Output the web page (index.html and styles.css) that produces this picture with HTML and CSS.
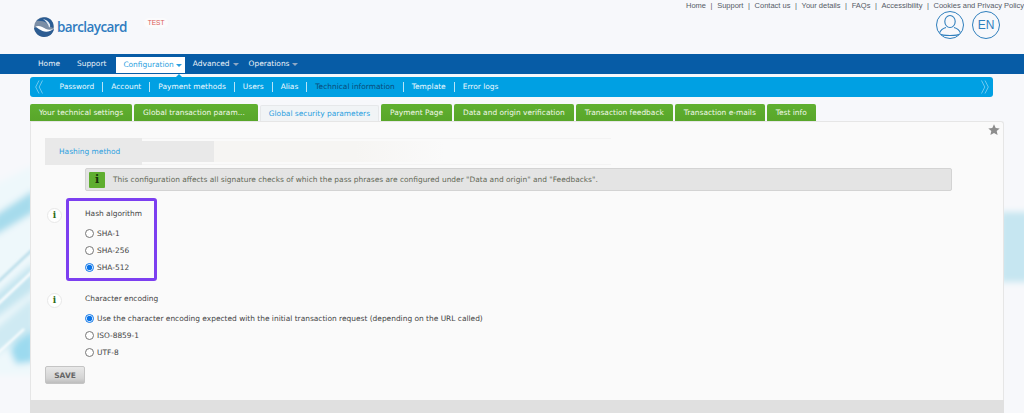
FILE: index.html
```html
<!DOCTYPE html>
<html lang="en">
<head>
<meta charset="utf-8">
<title>Global security parameters</title>
<link rel="stylesheet" href="styles.css">
</head>
<body>
<svg class="wash" viewBox="0 0 1024 413" width="1024" height="413" aria-hidden="true">
  <defs>
    <filter id="soft" x="-30%" y="-30%" width="160%" height="160%"><feGaussianBlur stdDeviation="3"/></filter>
    <filter id="softer" x="-30%" y="-30%" width="160%" height="160%"><feGaussianBlur stdDeviation="1.200"/></filter>
  </defs>
  <g filter="url(#soft)">
    <path d="M-6 185L34 165V375L-6 375z" fill="#eef8fb"/>
    <path d="M-6 216L34 190V212L-6 236z" fill="#a6dbec"/>
    <path d="M-6 296L34 262V290L-6 320z" fill="#c4e5f0"/>
    <path d="M10 350L34 318V362L16 364z" fill="#9cdaef"/>
    <path d="M-6 330L34 296V330L-6 356z" fill="#cfeaf3"/>
  </g>
  <g filter="url(#softer)">
    <path d="M-2 282L32 250" stroke="#bddfeb" stroke-width="3" fill="none"/>
    <path d="M-2 304L32 272" stroke="#fafdfe" stroke-width="3" fill="none"/>
    <path d="M-2 353L24 329" stroke="#ffffff" stroke-width="2" fill="none"/>
  </g>
  <path d="M1000 212H1030V282H1000z" fill="#c6e6f1" filter="url(#soft)"/>
</svg>

<header class="masthead">
  <div class="brand">
    <svg class="logo-mark" viewBox="0 0 20 20" width="20" height="20" aria-hidden="true">
      <circle cx="10" cy="10" r="10" fill="#7b8ea6"/>
      <path d="M2 4.500C5 .5 12-1 16 2c3 2.500 4 6 3 9-3-1-5-3-6.500-5-2-1.500-6-2.500-10.500-2z" fill="#2a5c94"/>
      <path d="M0 11c4-2 8 0 11 2 3 1.500 6 1 9-1-1 5-5 8-10 8-5 0-9-4-10-9z" fill="#2d5d92"/>
      <path d="M1.500 9.500C5 8 9 10 12 12c2.500 1 5 1 7.500-.5C16 15 12 15.500 8.500 14 6 13 3.500 11 1.500 9.500z" fill="#fff"/>
      <path d="M9 2c3 .5 6 2.500 7 5.500.3 1.500 0 2.500-.8 3C14.500 7.500 12 4 9 2z" fill="#e4ebf3"/>
    </svg>
    <span class="wordmark">barclaycard</span>
    <span class="env">TEST</span>
  </div>
  <div class="account">
    <nav class="toplinks">
      <a>Home</a><i>|</i><a>Support</a><i>|</i><a>Contact us</a><i>|</i><a>Your details</a><i>|</i><a>FAQs</a><i>|</i><a>Accessibility</a><i>|</i><a>Cookies and Privacy Policy</a>
    </nav>
    <div class="round-buttons">
      <span class="round">
        <svg viewBox="0 0 26 26" width="26" height="26" fill="none" stroke="#2f7fbd" stroke-width="1.100" aria-hidden="true">
          <ellipse cx="13" cy="9.500" rx="5.200" ry="6"/>
          <path d="M2.500 21c1-3 3-4.500 6.500-5.500M23.500 21c-1-3-3-4.500-6.500-5.500M3 22c2 2 18 2 20 0"/>
        </svg>
      </span>
      <span class="round lang">EN</span>
    </div>
  </div>
</header>

<nav class="mainnav">
  <a>Home</a>
  <a>Support</a>
  <a class="current">Configuration<b class="caret"></b></a>
  <a class="drop">Advanced<b class="caret dim"></b></a>
  <a class="drop">Operations<b class="caret dim"></b></a>
</nav>

<nav class="subnav">
  <svg class="chev" viewBox="0 0 8 14" width="8" height="14" fill="none" stroke="#6cc8ef" stroke-width="1" aria-hidden="true"><path d="M4 .5L.7 7 4 13.500M7.500 .5L4.200 7l3.300 6.500"/></svg>
  <div class="sublinks">
    <a>Password</a><a>Account</a><a>Payment methods</a><a>Users</a><a>Alias</a><a class="active">Technical information</a><a>Template</a><a>Error logs</a>
  </div>
  <svg class="chev" viewBox="0 0 8 14" width="8" height="14" fill="none" stroke="#6cc8ef" stroke-width="1" aria-hidden="true"><path d="M.5 .5L3.800 7 .5 13.500M4 .5L7.300 7 4 13.500"/></svg>
</nav>

<div class="tabs">
  <a class="tab">Your technical settings</a>
  <a class="tab truncated">Global transaction param...</a>
  <a class="tab selected">Global security parameters</a>
  <a class="tab">Payment Page</a>
  <a class="tab">Data and origin verification</a>
  <a class="tab">Transaction feedback</a>
  <a class="tab">Transaction e-mails</a>
  <a class="tab">Test info</a>
</div>

<main class="panel">
  <div class="star-row">
    <svg viewBox="0 0 12 12" width="12" height="12" aria-hidden="true"><path d="M6 .3l1.700 3.700 4 .4-3 2.700.9 4L6 9.100 2.400 11.100l.9-4-3-2.700 4-.4z" fill="#8d8d8d"/></svg>
  </div>
  <h2 class="section"><span class="section-label">Hashing method</span></h2>
  <div class="notice">
    <span class="notice-icon">i</span>
    <p>This configuration affects all signature checks of which the pass phrases are configured under "Data and origin" and "Feedbacks".</p>
  </div>
  <div class="field first">
    <span class="hint">i</span>
    <div class="group highlighted" role="radiogroup">
      <div class="group-title">Hash algorithm</div>
      <label><input type="radio" name="hash">SHA-1</label>
      <label><input type="radio" name="hash">SHA-256</label>
      <label><input type="radio" name="hash" checked>SHA-512</label>
    </div>
  </div>
  <div class="field second">
    <span class="hint">i</span>
    <div class="group" role="radiogroup">
      <div class="group-title">Character encoding</div>
      <label><input type="radio" name="enc" checked>Use the character encoding expected with the initial transaction request (depending on the URL called)</label>
      <label><input type="radio" name="enc">ISO-8859-1</label>
      <label><input type="radio" name="enc">UTF-8</label>
    </div>
  </div>
  <button class="save" type="button">SAVE</button>
</main>
<div class="panel-foot"></div>
</body>
</html>
```
FILE: styles.css
```css
* { box-sizing: border-box; }
html, body { height: 100%; }
body {
  margin: 0;
  overflow: hidden;
  font-family: "DejaVu Sans", Verdana, sans-serif;
  font-size: 7.45px;
  color: #444;
  background-color: #f7f8fb;
}
a { color: inherit; text-decoration: none; }
.wash { position: absolute; left: 0; top: 0; z-index: -1; }

.masthead {
  height: 54px;
  display: flex;
  justify-content: space-between;
}
.brand {
  display: flex;
  align-items: flex-start;
  padding: 17px 0 0 34px;
}
.logo-mark { flex: none; }
.wordmark {
  font-family: "Open Sans", sans-serif;
  font-size: 13.5px;
  font-weight: 600;
  line-height: 20px;
  letter-spacing: -0.6px;
  color: #2f7cc0;
  margin-left: 3px;
}
.env {
  font-family: "Liberation Sans", sans-serif;
  font-size: 6.5px;
  line-height: 10px;
  color: #dc5a55;
  background: #fbfbfc;
  border-radius: 5px;
  padding: 0 4px;
  margin: 1px 0 0 17px;
}
.account {
  width: 340px;
  display: flex;
  flex-direction: column;
  align-items: flex-end;
}
.toplinks {
  font-family: "Liberation Sans", sans-serif;
  font-size: 7.5px;
  line-height: 11px;
  color: #555a66;
  white-space: nowrap;
}
.toplinks i { font-style: normal; margin: 0 4.6px; }
.round-buttons {
  display: flex;
  gap: 8px;
  padding-right: 24px;
}
.round {
  width: 28px;
  height: 28px;
  border: 1px solid #2f7fbd;
  border-radius: 50%;
  display: flex;
  align-items: center;
  justify-content: center;
  overflow: hidden;
}
.lang {
  font-family: "Liberation Sans", sans-serif;
  font-size: 12px;
  color: #2f7fbd;
}

.mainnav {
  height: 20px;
  background: #075ca6;
  display: flex;
  align-items: flex-start;
  padding: 3px 0 0 30px;
  color: #eef3f8;
}
.mainnav a { line-height: 14px; padding: 0 8px; margin-right: 1px; white-space: nowrap; }
.mainnav a.current {
  position: relative;
  background: #fff;
  color: #2c9fe0;
  height: 16px;
  line-height: 15px;
  padding: 0 3px 0 7px;
  margin: 0 0 0 1px;
}
.mainnav a.drop { padding-right: 1px; }
.mainnav a.current::after {
  content: "";
  position: absolute;
  left: 60px;
  top: 17px;
  border: 3px solid transparent;
  border-bottom-color: #00a0e3;
  border-top: 0;
}
.caret {
  display: inline-block;
  width: 0;
  height: 0;
  border: 3px solid transparent;
  border-top-color: #2c9fe0;
  border-bottom: 0;
  margin-left: 2px;
}
.caret.dim { border-top-color: #8fa8c4; margin-left: 3px; }

.subnav {
  height: 20px;
  width: 963px;
  margin: 3px 0 0 30px;
  background: #00a0e3;
  border-radius: 3px;
  display: flex;
  align-items: center;
  padding: 0 4px 0 5px;
  color: #eefaff;
}
.chev { flex: none; }
.sublinks { flex: 1; display: flex; padding-left: 8.5px; white-space: nowrap; }
.sublinks a { padding: 0 8px; border-right: 1px solid #b7e4f7; line-height: 10px; }
.sublinks a:last-child { border-right: 0; }
.sublinks a.active { color: #0b4a78; }

.tabs {
  display: flex;
  gap: 2px;
  margin: 7px 0 0 30px;
  height: 17px;
}
.tab {
  height: 17px;
  padding: 0 9px;
  background: linear-gradient(#60b030, #58a62a);
  border-radius: 2px 2px 0 0;
  color: #f2f8ea;
  line-height: 17px;
  white-space: nowrap;
}
.tab.truncated { padding-right: 13px; }
.tab.selected {
  background: #f1f4f6;
  color: #2c9fe0;
  height: 16px;
  line-height: 15px;
  margin-top: 1px;
  padding: 0 8px;
  border: 1px solid #e6e8ea;
  border-bottom: 0;
}

.panel {
  width: 974px;
  height: 279px;
  margin-left: 30px;
  background: #fafafa;
  border: 1px solid #e6e6e6;
  border-bottom: 0;
  border-radius: 0 3px 0 0;
  padding: 0 14px;
}
.star-row {
  display: flex;
  justify-content: flex-end;
  height: 16px;
  padding-top: 2px;
  margin-right: -11px;
}
.section {
  height: 27px;
  margin: 0;
  font-size: inherit;
  font-weight: normal;
  color: #2c9fe0;
  line-height: 27px;
  padding-left: 14px;
  background:
    linear-gradient(90deg, #e9e9e9 0 97px, transparent 97px) 0 0 no-repeat,
    linear-gradient(90deg, #e9e9e9 0 169px, #f6f5f3 169px 310px, #fafafa 400px) 0 3px / 100% 21px no-repeat,
    linear-gradient(#f3f3f3, #f3f3f3) 0 0 / 60% 1px no-repeat,
    linear-gradient(#f3f3f3, #f3f3f3) 0 100% / 60% 1px no-repeat;
}
.notice {
  margin: 3px 0 0 40px;
  width: 867px;
  height: 23px;
  background: #e4e4e4;
  border: 1px solid #d3d3d3;
  border-radius: 2px;
  display: flex;
  align-items: center;
  padding-left: 3px;
  color: #636857;
}
.notice p { margin: 0 0 0 8px; }
.notice-icon {
  width: 16px;
  height: 16px;
  background: #5fae2f;
  color: #17310a;
  font-family: "DejaVu Serif", serif;
  font-weight: bold;
  font-size: 11px;
  line-height: 16px;
  text-align: center;
  border-radius: 1px;
}
.field { display: flex; align-items: flex-start; }
.field.first { margin-top: 7px; }
.field.second { margin-top: 2px; }
.hint {
  width: 15px;
  height: 15px;
  border: 1px solid #e8e8e8;
  border-radius: 50%;
  background: #fff;
  color: #2f6b16;
  font-family: "DejaVu Serif", serif;
  font-weight: bold;
  font-size: 9px;
  line-height: 13px;
  text-align: center;
  margin: 10px 0 0 2px;
  flex: none;
}
.group {
  border: 3px solid transparent;
  margin-left: 4px;
  padding: 8px 0 0 16px;
  white-space: nowrap;
}
.group.highlighted {
  width: 91px;
  height: 83px;
  border-color: #7c3ff0;
  border-radius: 3px;
}
.group-title { line-height: 10px; margin-bottom: 6px; color: #444; }
.group label { display: flex; align-items: center; height: 17px; color: #444; }
.group input {
  width: 9px;
  height: 9px;
  margin: 0 3px 0 0;
  accent-color: #0a74e8;
  flex: none;
}
.save {
  display: block;
  width: 40px;
  height: 18px;
  margin: 2px 0 0;
  padding: 0;
  border: 1px solid #c4c4c4;
  border-radius: 2px;
  background: linear-gradient(#e8e8e8, #d4d4d4 70%, #bdbdbd);
  font: bold 7.5px "DejaVu Sans", Verdana, sans-serif;
  color: #666;
}
.panel-foot {
  width: 974px;
  height: 13px;
  margin-left: 30px;
  background: #e0e0e0;
}
```
